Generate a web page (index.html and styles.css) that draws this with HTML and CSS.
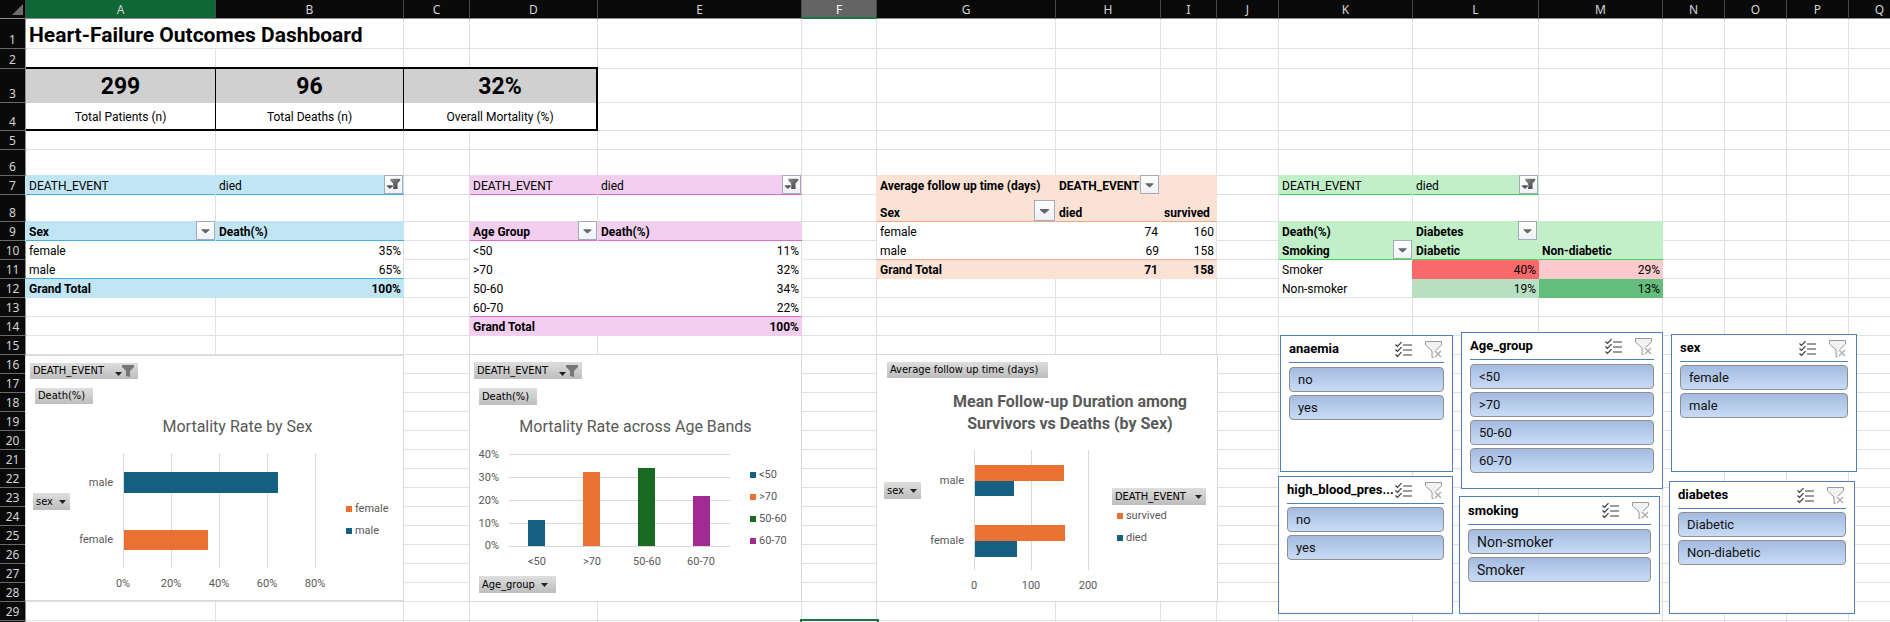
FILE: index.html
```html
<!DOCTYPE html>
<html lang="en">
<head>
<meta charset="utf-8">
<title>Heart-Failure Outcomes Dashboard</title>
<link rel="stylesheet" href="styles.css">
</head>
<body>
<svg class="defs" aria-hidden="true">
  <defs>
    <linearGradient id="steel" x1="0" x2="1" y1="0" y2="1"><stop offset="0" stop-color="#8a8a8a"/><stop offset="1" stop-color="#3f3f3f"/></linearGradient>
    <symbol id="i-down" viewBox="0 0 19 19"><path d="M5 8h9v1l-4 3.500h-1l-4-3.500z" fill="#666"/></symbol>
    <symbol id="i-filtered" viewBox="0 0 19 19"><path d="M6 3h11v2l-3 3.500v6h-5V8.500L6 5z" fill="url(#steel)"/><path d="M2 10h7v1.500l-3 3h-1l-3-3z" fill="#555" stroke="#fff" stroke-width=".6"/></symbol>
    <symbol id="i-field-filter" viewBox="0 0 19 14"><path d="M7 1h12v2l-4 4v6l-4-1V7L7 3z" fill="#777"/><path d="M0 8h7L3.500 12z" fill="#222"/></symbol>
    <symbol id="i-caret" viewBox="0 0 7 4"><path d="M0 0h7L3.500 4z" fill="#222"/></symbol>
    <symbol id="i-multi" viewBox="0 0 17 16"><path d="M8 3.500h9M8 8.500h9M8 13.500h9" stroke="#3b3b3b"/><path d="M.5 3l2 2L6.500 .7M.5 8l2 2 4-4.300M.5 13l2 2 4-4.300" fill="none" stroke="#3b3b3b" stroke-width="1.200"/></symbol>
    <symbol id="i-clear" viewBox="0 0 17 17"><path d="M.5 .5h16v4L11 10l-2 2v4H7v-6L.5 4.500z" fill="#f2f2f2"/><path d="M11 9l5.500-5V.5H.5V4L7 10v6.500h1.500" fill="none" stroke="#999"/><path d="M10 10l6 6M16 10l-6 6" stroke="#b0b0b0" stroke-width="1.500"/></symbol>
  </defs>
</svg>

<main class="workbook">
<table class="sheet">
<colgroup><col class="w-head"><col class="w-a"><col class="w-b"><col class="w-c"><col class="w-d"><col class="w-e"><col class="w-f"><col class="w-g"><col class="w-h"><col class="w-i"><col class="w-s"><col class="w-k"><col class="w-l"><col class="w-m"><col class="w-s"><col class="w-s"><col class="w-s"><col class="w-s"></colgroup>
<thead>
<tr><th class="corner"><svg viewBox="0 0 11 11" aria-hidden="true"><path d="M11 0v11H0z" fill="#6e6e6e"/></svg></th><th class="picked">A<th>B<th>C<th>D<th>E<th class="current">F<th>G<th>H<th>I<th>J<th>K<th>L<th>M<th>N<th>O<th>P<th>Q</tr>
</thead>
<tbody>
<tr class="r30"><th>1<td colspan="2" class="title">Heart-Failure Outcomes Dashboard<td><td><td><td><td><td><td><td><td><td><td><td><td><td><td></tr>
<tr class="r20"><th>2<td><td><td><td><td><td><td><td><td><td><td><td><td><td><td><td><td></tr>
<tr class="r34"><th>3<td class="kpi">299<td class="kpi">96<td colspan="2" class="kpi kpi-last">32%<td><td><td><td><td><td><td><td><td><td><td><td><td></tr>
<tr class="r28"><th>4<td class="kpi-name">Total Patients (n)<td class="kpi-name">Total Deaths (n)<td colspan="2" class="kpi-name kpi-last">Overall Mortality (%)<td><td><td><td><td><td><td><td><td><td><td><td><td></tr>
<tr><th>5<td><td><td><td><td><td><td><td><td><td><td><td><td><td><td><td><td></tr>
<tr class="r26"><th>6<td><td><td><td><td><td><td><td><td><td><td><td><td><td><td><td><td></tr>
<tr><th>7<td class="blue cap rule">DEATH_EVENT<td class="blue cap rule">died<button class="drop" aria-label="Filter DEATH_EVENT"><svg><use href="#i-filtered"/></svg></button><td><td class="pink cap rule">DEATH_EVENT<td class="pink cap rule">died<button class="drop" aria-label="Filter DEATH_EVENT"><svg><use href="#i-filtered"/></svg></button><td><td class="peach cap bold">Average follow up time (days)<td class="peach cap bold">DEATH_EVENT<button class="drop" aria-label="Column labels"><svg><use href="#i-down"/></svg></button><td class="peach cap"><td><td class="green cap rule">DEATH_EVENT<td class="green cap rule">died<button class="drop" aria-label="Filter DEATH_EVENT"><svg><use href="#i-filtered"/></svg></button><td><td><td><td><td></tr>
<tr class="r27"><th>8<td><td><td><td><td><td><td class="peach cap bold rule">Sex<button class="drop drop-large" aria-label="Row labels"><svg><use href="#i-down"/></svg></button><td class="peach cap bold rule">died<td class="peach cap bold rule">survived<td><td><td><td><td><td><td><td></tr>
<tr><th>9<td class="blue cap bold rule">Sex<button class="drop" aria-label="Row labels"><svg><use href="#i-down"/></svg></button><td class="blue cap bold rule">Death(%)<td><td class="pink cap bold rule">Age Group<button class="drop" aria-label="Row labels"><svg><use href="#i-down"/></svg></button><td class="pink cap bold rule">Death(%)<td><td class="plain">female<td class="plain num">74<td class="plain num edge">160<td><td class="green cap bold">Death(%)<td class="green cap bold">Diabetes<button class="drop" aria-label="Column labels"><svg><use href="#i-down"/></svg></button><td class="green cap"><td><td><td><td></tr>
<tr><th>10<td class="plain">female<td class="plain num edge">35%<td><td class="plain">&lt;50<td class="plain num edge">11%<td><td class="plain peach-line">male<td class="plain num peach-line">69<td class="plain num edge peach-line">158<td><td class="green bold rule">Smoking<button class="drop" aria-label="Row labels"><svg><use href="#i-down"/></svg></button><td class="green bold rule">Diabetic<td class="green bold rule">Non-diabetic<td><td><td><td></tr>
<tr><th>11<td class="plain blue-line">male<td class="plain num edge blue-line">65%<td><td class="plain">&gt;70<td class="plain num edge">32%<td><td class="peach bold">Grand Total<td class="peach bold num">71<td class="peach bold num">158<td><td class="plain">Smoker<td class="heat-red num">40%<td class="heat-rose num">29%<td><td><td><td></tr>
<tr><th>12<td class="blue bold">Grand Total<td class="blue bold num">100%<td><td class="plain">50-60<td class="plain num edge">34%<td><td><td><td><td><td class="plain last">Non-smoker<td class="heat-mint num">19%<td class="heat-green num">13%<td><td><td><td></tr>
<tr><th>13<td><td><td><td class="plain pink-line">60-70<td class="plain num edge pink-line">22%<td><td><td><td><td><td><td><td><td><td><td><td></tr>
<tr><th>14<td><td><td><td class="pink bold">Grand Total<td class="pink bold num">100%<td><td><td><td><td><td><td><td><td><td><td><td></tr>
<tr><th>15<td><td><td><td><td><td><td><td><td><td><td><td><td><td><td><td><td></tr>
<tr><th>16<td><td><td><td><td><td><td><td><td><td><td><td><td><td><td><td><td></tr>
<tr><th>17<td><td><td><td><td><td><td><td><td><td><td><td><td><td><td><td><td></tr>
<tr><th>18<td><td><td><td><td><td><td><td><td><td><td><td><td><td><td><td><td></tr>
<tr><th>19<td><td><td><td><td><td><td><td><td><td><td><td><td><td><td><td><td></tr>
<tr><th>20<td><td><td><td><td><td><td><td><td><td><td><td><td><td><td><td><td></tr>
<tr><th>21<td><td><td><td><td><td><td><td><td><td><td><td><td><td><td><td><td></tr>
<tr><th>22<td><td><td><td><td><td><td><td><td><td><td><td><td><td><td><td><td></tr>
<tr><th>23<td><td><td><td><td><td><td><td><td><td><td><td><td><td><td><td><td></tr>
<tr><th>24<td><td><td><td><td><td><td><td><td><td><td><td><td><td><td><td><td></tr>
<tr><th>25<td><td><td><td><td><td><td><td><td><td><td><td><td><td><td><td><td></tr>
<tr><th>26<td><td><td><td><td><td><td><td><td><td><td><td><td><td><td><td><td></tr>
<tr><th>27<td><td><td><td><td><td><td><td><td><td><td><td><td><td><td><td><td></tr>
<tr><th>28<td><td><td><td><td><td><td><td><td><td><td><td><td><td><td><td><td></tr>
<tr><th>29<td><td><td><td><td><td><td><td><td><td><td><td><td><td><td><td><td></tr>
<tr><th class="picked"><td><td><td><td><td><td class="active"><td><td><td><td><td><td><td><td><td><td><td></tr>
</tbody>
</table>

<figure class="chart chart-sex">
  <button class="field">DEATH_EVENT<svg class="ic-filter"><use href="#i-field-filter"/></svg></button>
  <button class="field inset">Death(%)</button>
  <figcaption>Mortality Rate by Sex</figcaption>
  <div class="plot-row">
    <button class="field">sex<svg class="ic-caret"><use href="#i-caret"/></svg></button>
    <svg class="plot" width="264" height="144" role="img" aria-label="Mortality: male 65%, female 35%">
      <path class="grid" d="M52.500 4v115M100.500 4v115M148.500 4v115M196.500 4v115M244.500 4v115"/>
      <rect class="teal" x="53" y="23" width="154" height="21"/>
      <rect class="orange" x="53" y="81" width="84" height="20"/>
      <text class="end" x="42" y="37">male</text><text class="end" x="42" y="94">female</text>
      <text class="mid" x="52" y="138">0%</text><text class="mid" x="100" y="138">20%</text><text class="mid" x="148" y="138">40%</text><text class="mid" x="196" y="138">60%</text><text class="mid" x="244" y="138">80%</text>
    </svg>
    <ul class="legend"><li><i class="key key-orange"></i>female</li><li><i class="key key-teal"></i>male</li></ul>
  </div>
</figure>

<figure class="chart chart-age">
  <button class="field">DEATH_EVENT<svg class="ic-filter"><use href="#i-field-filter"/></svg></button>
  <button class="field inset">Death(%)</button>
  <figcaption>Mortality Rate across Age Bands</figcaption>
  <div class="plot-row">
    <svg class="plot" width="262" height="124" role="img" aria-label="Mortality by age group">
      <path class="grid" d="M39 8.500h221M39 31.500h221M39 54.500h221M39 77.500h221M39 100.500h221"/>
      <rect class="teal" x="58" y="74" width="17" height="26"/>
      <rect class="orange" x="113" y="26" width="17" height="74"/>
      <rect class="forest" x="168" y="22" width="17" height="78"/>
      <rect class="purple" x="223" y="50" width="17" height="50"/>
      <text class="end" x="29" y="12">40%</text><text class="end" x="29" y="35">30%</text><text class="end" x="29" y="58">20%</text><text class="end" x="29" y="81">10%</text><text class="end" x="29" y="103">0%</text>
      <text class="mid" x="67" y="119">&lt;50</text><text class="mid" x="122" y="119">&gt;70</text><text class="mid" x="177" y="119">50-60</text><text class="mid" x="231" y="119">60-70</text>
    </svg>
    <ul class="legend"><li><i class="key key-teal"></i>&lt;50</li><li><i class="key key-orange"></i>&gt;70</li><li><i class="key key-forest"></i>50-60</li><li><i class="key key-purple"></i>60-70</li></ul>
  </div>
  <button class="field inset">Age_group<svg class="ic-caret"><use href="#i-caret"/></svg></button>
</figure>

<figure class="chart chart-follow">
  <button class="field wide">Average follow up time (days)</button>
  <figcaption>Mean Follow-up Duration among Survivors vs Deaths (by Sex)</figcaption>
  <div class="plot-row">
    <button class="field">sex<svg class="ic-caret"><use href="#i-caret"/></svg></button>
    <svg class="plot" width="190" height="150" role="img" aria-label="Mean follow-up by sex and outcome">
      <path class="grid" d="M52.500 5v120M109.500 5v120M166.500 5v120"/>
      <rect class="orange" x="53" y="20" width="89" height="16"/><rect class="teal" x="53" y="36" width="39" height="15"/>
      <rect class="orange" x="53" y="80" width="90" height="16"/><rect class="teal" x="53" y="96" width="42" height="16"/>
      <text class="end" x="42" y="39">male</text><text class="end" x="42" y="99">female</text>
      <text class="mid" x="52" y="144">0</text><text class="mid" x="109" y="144">100</text><text class="mid" x="166" y="144">200</text>
    </svg>
    <div class="legend-box">
      <button class="field">DEATH_EVENT<svg class="ic-caret"><use href="#i-caret"/></svg></button>
      <ul class="legend"><li><i class="key key-orange"></i>survived</li><li><i class="key key-teal"></i>died</li></ul>
    </div>
  </div>
</figure>

<section class="slicer at-anaemia"><header><h2>anaemia</h2><button aria-label="Multi-select"><svg><use href="#i-multi"/></svg></button><button aria-label="Clear filter"><svg><use href="#i-clear"/></svg></button></header><button class="item">no</button><button class="item">yes</button></section>
<section class="slicer at-age"><header><h2>Age_group</h2><button aria-label="Multi-select"><svg><use href="#i-multi"/></svg></button><button aria-label="Clear filter"><svg><use href="#i-clear"/></svg></button></header><button class="item">&lt;50</button><button class="item">&gt;70</button><button class="item">50-60</button><button class="item">60-70</button></section>
<section class="slicer tight at-sex"><header><h2>sex</h2><button aria-label="Multi-select"><svg><use href="#i-multi"/></svg></button><button aria-label="Clear filter"><svg><use href="#i-clear"/></svg></button></header><button class="item">female</button><button class="item">male</button></section>
<section class="slicer tight at-pressure"><header><h2>high_blood_pres...</h2><button aria-label="Multi-select"><svg><use href="#i-multi"/></svg></button><button aria-label="Clear filter"><svg><use href="#i-clear"/></svg></button></header><button class="item">no</button><button class="item">yes</button></section>
<section class="slicer at-smoking"><header><h2>smoking</h2><button aria-label="Multi-select"><svg><use href="#i-multi"/></svg></button><button aria-label="Clear filter"><svg><use href="#i-clear"/></svg></button></header><button class="item">Non-smoker</button><button class="item">Smoker</button></section>
<section class="slicer tight at-diabetes"><header><h2>diabetes</h2><button aria-label="Multi-select"><svg><use href="#i-multi"/></svg></button><button aria-label="Clear filter"><svg><use href="#i-clear"/></svg></button></header><button class="item">Diabetic</button><button class="item">Non-diabetic</button></section>
</main>
</body>
</html>
```
FILE: styles.css
```css
* { box-sizing: border-box; }
body { margin: 0; background: #fff; color: #000; font: 12px/16px Roboto, "Liberation Sans", sans-serif; }
button { font: inherit; color: inherit; padding: 0; border: 0; background: none; }
.defs { position: absolute; width: 0; height: 0; }
.workbook { position: relative; height: 100vh; overflow: hidden; }

/* Sheet grid */
.sheet { table-layout: fixed; width: 1911px; border-collapse: separate; border-spacing: 0; }
.w-head { width: 26px; } .w-a { width: 190px; } .w-b { width: 188px; } .w-c { width: 66px; }
.w-d { width: 128px; } .w-e { width: 204px; } .w-f { width: 75px; } .w-g { width: 179px; }
.w-h { width: 105px; } .w-i { width: 56px; } .w-s { width: 62px; } .w-k { width: 134px; }
.w-l { width: 126px; } .w-m { width: 124px; }
.sheet tr { height: 19px; }
.sheet .r20 { height: 20px; } .sheet .r26 { height: 26px; } .sheet .r27 { height: 27px; }
.sheet .r28 { height: 28px; } .sheet .r30 { height: 30px; } .sheet .r34 { height: 34px; }
.sheet th { padding: 0; background: #0a0a0a; color: #d4d4d4; font: 12px/16px "Noto Sans", sans-serif; text-align: center; vertical-align: bottom; border-right: 1px solid #8f8f8f; border-bottom: 1px solid #6a6a6a; }
.sheet thead th { border-right-color: #4a4a4a; border-bottom-color: #8f8f8f; }
.sheet thead .picked { background: #0f6735; }
.sheet thead .current { background: #646464; color: #fff; border-bottom-color: #1a7343; box-shadow: inset 0 -1px 0 #1a7343; }
.sheet .corner { text-align: right; vertical-align: middle; padding-right: 2px; }
.corner svg { display: block; width: 11px; height: 11px; margin-left: auto; }
.sheet td { position: relative; padding: 0 3px; vertical-align: bottom; white-space: nowrap; line-height: 16px; border-right: 1px solid #e0e0e0; border-bottom: 1px solid #e0e0e0; }
.sheet .title { font-size: 21px; font-weight: 700; line-height: 26px; }
.sheet .kpi { background: #d0d0d0; font-size: 23px; font-weight: 700; line-height: 32px; text-align: center; border-bottom: 0; border-right-color: #000; box-shadow: 0 -2px 0 #000; }
.sheet .kpi-name { padding-top: 2px; text-align: center; vertical-align: middle; border-right-color: #000; border-bottom: 2px solid #000; }
.sheet .kpi-last { border-right: 2px solid #000; }
.sheet .bold { font-weight: 700; }
.sheet .num { text-align: right; padding-right: 2px; }
.sheet .plain { border-color: transparent; }
.sheet .edge { border-right-color: #e0e0e0; }
.sheet .last { border-bottom-color: #e0e0e0; }
.sheet .blue { --fill: #c0e6f5; --line: #45b0e1; }
.sheet .pink { --fill: #f2ceef; --line: #d86dcd; }
.sheet .peach { --fill: #fbe2d5; --line: #f1a983; }
.sheet .green { --fill: #c1f0c8; --line: #47d359; }
.sheet .blue, .sheet .pink, .sheet .peach, .sheet .green { background: var(--fill); border-color: var(--fill); box-shadow: -1px 0 0 var(--fill); }
.sheet .cap { box-shadow: -1px 0 0 var(--fill), 0 -1px 0 var(--fill); }
.sheet .rule { border-right: 0; border-bottom-color: var(--line); }
.sheet .blue-line { border-bottom-color: #45b0e1; }
.sheet .pink-line { border-bottom-color: #d86dcd; }
.sheet .peach-line { border-bottom-color: #f1a983; }
.sheet .blue-line:not(.edge), .sheet .pink-line:not(.edge), .sheet .peach-line:not(.edge) { border-right: 0; }
.sheet .heat-red { background: #f8696b; border-color: #f8696b; box-shadow: -1px 0 0 #f8696b; }
.sheet .heat-rose { background: #fbcacc; border-color: #fbcacc; }
.sheet .heat-mint { background: #b7e0c3; border-color: #b7e0c3; box-shadow: -1px 0 0 #b7e0c3; }
.sheet .heat-green { background: #63be7b; border-color: #63be7b; }
.sheet .active { box-shadow: 0 0 0 2px #1a7343; }
.drop { position: absolute; right: 1px; bottom: 0; width: 19px; height: 19px; border: 1px solid #a4abb8; background: linear-gradient(#fff, #eef1f6); }
.drop-large { width: 21px; height: 21px; }
.drop svg { display: block; width: 100%; height: 100%; }

/* Charts */
.chart { position: absolute; margin: 0; display: flex; flex-direction: column; align-items: flex-start; background: #fff; border: 1px solid #d9d9d9; color: #595959; font-size: 11px; }
.chart-sex { left: 25px; top: 355px; width: 379px; height: 246px; padding: 7px 4px; }
.chart-age { left: 469px; top: 354px; width: 333px; height: 248px; padding: 7px 4px; }
.chart-follow { left: 876px; top: 354px; width: 342px; height: 248px; padding: 7px; }
.field { display: flex; align-items: center; height: 17px; padding: 0 4px 0 3px; background: linear-gradient(#dedede, #bdbdbd); color: #000; font: 11px/16px "DejaVu Sans Condensed", "DejaVu Sans", sans-serif; white-space: nowrap; }
.chart > .field + .field { margin-top: 9px; }
.inset { margin-left: 5px; padding-right: 8px; }
.wide { margin-left: 3px; padding-right: 10px; }
.ic-filter { width: 19px; height: 14px; margin-left: 11px; }
.ic-caret { width: 7px; height: 4px; margin-left: 6px; }
.chart figcaption { align-self: center; font-size: 16px; line-height: 22px; }
.chart-sex figcaption { margin: 12px 0 11px 46px; }
.chart-age figcaption { margin: 11px 0 8px; }
.chart-follow figcaption { width: 260px; margin: 13px 0 10px 46px; font-weight: 700; text-align: center; }
.plot-row { display: flex; align-items: flex-start; }
.plot { flex: none; display: block; overflow: visible; }
.plot text { fill: #595959; font-size: 11px; }
.end { text-anchor: end; }
.mid { text-anchor: middle; }
.grid { stroke: #d9d9d9; fill: none; }
.teal { fill: #156082; } .orange { fill: #e97132; } .forest { fill: #196b24; } .purple { fill: #a02b93; }
.legend { margin: 0; padding: 0; list-style: none; line-height: 22px; }
.legend li { display: flex; align-items: center; gap: 3px; }
.key { width: 6px; height: 6px; }
.key-teal { background: #156082; } .key-orange { background: #e97132; } .key-forest { background: #196b24; } .key-purple { background: #a02b93; }
.chart-sex .plot-row > .field { margin: 44px 1px 0 3px; }
.chart-sex .legend { margin-top: 49px; margin-left: 11px; }
.chart-age .legend { margin-top: 18px; margin-left: 18px; }
.chart-age .plot { margin-left: -4px; }
.chart-age .plot-row + .field { margin-top: 6px; }
.chart-follow .plot-row > .field { margin: 37px 1px 0 0; }
.legend-box { margin-top: 43px; }
.legend-box .legend { margin-left: 5px; }
.legend-box .ic-caret { margin-left: 9px; }

/* Slicers */
.slicer { position: absolute; display: flex; flex-direction: column; gap: 3px; padding: 0 8px; background: #fff; border: 1px solid #4f81bd; font-size: 13px; }
.slicer header { display: flex; align-items: center; gap: 13px; height: 27px; padding-right: 2px; margin-bottom: 1px; border-bottom: 1px solid #4f81bd; }
.slicer.tight header { margin-bottom: 0; }
.slicer h2 { flex: 1; min-width: 0; margin: 0; font-size: 13px; line-height: 16px; white-space: nowrap; }
.slicer header button { width: 17px; height: 17px; }
.slicer header svg { display: block; width: 17px; height: 17px; }
.item { height: 25px; padding: 0 8px; border: 1px solid #8f8f8f; border-radius: 4px; background: linear-gradient(#a3bbe0, #c9dcf6); color: #111; text-align: left; }
.at-anaemia { left: 1280px; top: 335px; width: 173px; height: 137px; }
.at-age { left: 1461px; top: 332px; width: 202px; height: 157px; }
.at-sex { left: 1671px; top: 334px; width: 186px; height: 138px; }
.at-pressure { left: 1278px; top: 476px; width: 175px; height: 138px; }
.at-smoking { left: 1459px; top: 496px; width: 201px; height: 118px; }
.at-diabetes { left: 1669px; top: 481px; width: 186px; height: 133px; }
.at-smoking header { height: 28px; }
.at-smoking .item { font-size: 14px; }
```
